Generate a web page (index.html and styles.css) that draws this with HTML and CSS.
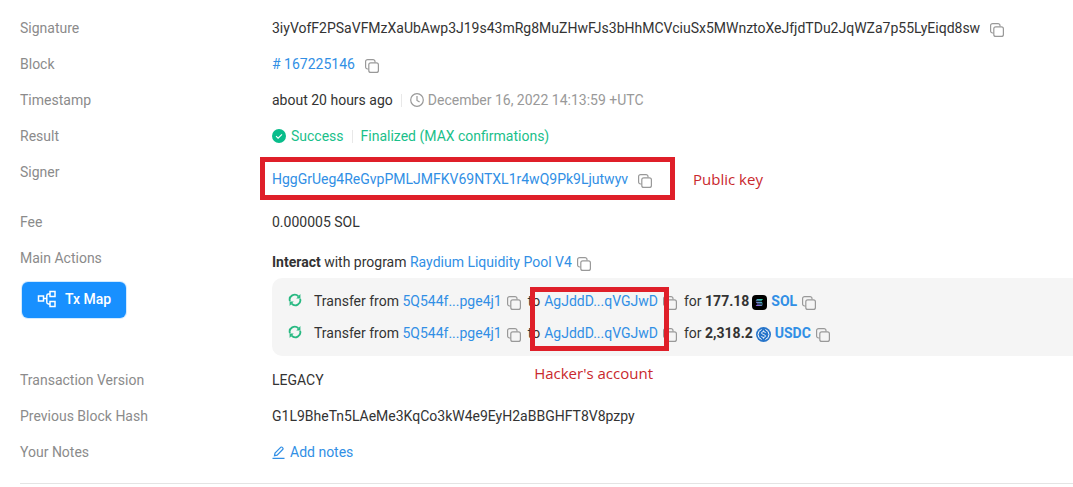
FILE: index.html
```
<!DOCTYPE html>
<html lang="en">
<head>
  <meta charset="UTF-8" />
  <meta name="viewport" content="width=device-width, initial-scale=1.0"/>
  <title>Transaction Details</title>
  <link rel="stylesheet" href="styles.css">
</head>
<body>

<!-- Shared icons -->
<svg class="sprite" aria-hidden="true">
  <symbol id="copy" viewBox="0 0 14 14">
    <path d="M3.6 10H2.6A2 2 0 0 1 .6 8V2.6A2 2 0 0 1 2.6.6H8a2 2 0 0 1 2 2v1" fill="none" stroke="currentColor" stroke-width="1.2"/>
    <rect x="3.8" y="3.8" width="9.6" height="9.6" rx="2" fill="none" stroke="currentColor" stroke-width="1.2"/>
  </symbol>
  <symbol id="sync" viewBox="0 0 14 14">
    <path d="M1.9 8.200A5 5 0 0 1 10.400 3.400M12.100 5.800A5 5 0 0 1 3.600 10.600" fill="none" stroke="currentColor" stroke-width="1.8"/>
    <path d="M12.400.9v4.500H8.300zM1.600 13.100V8.600h4.100z" fill="currentColor"/>
  </symbol>
</svg>

<dl class="details">
  <div class="row">
    <dt>Signature</dt>
    <dd>3iyVofF2PSaVFMzXaUbAwp3J19s43mRg8MuZHwFJs3bHhMCVciuSx5MWnztoXeJfjdTDu2JqWZa7p55LyEiqd8sw
      <button class="copy wide" aria-label="Copy signature"><svg><use href="#copy"/></svg></button>
    </dd>
  </div>
  <div class="row">
    <dt>Block</dt>
    <dd><a href="#"># 167225146</a>
      <button class="copy wide" aria-label="Copy block"><svg><use href="#copy"/></svg></button>
    </dd>
  </div>
  <div class="row">
    <dt>Timestamp</dt>
    <dd>about 20 hours ago
      <span class="divider"></span>
      <span class="date">
        <svg class="clock" viewBox="0 0 14 14" fill="none" stroke="currentColor" stroke-width="1.2"><circle cx="7" cy="7" r="6.3"/><path d="M7 3v4.4l2.6 1.6"/></svg>
        December 16, 2022 14:13:59 +UTC
      </span>
    </dd>
  </div>
  <div class="row">
    <dt>Result</dt>
    <dd class="success">
      <svg class="check" viewBox="0 0 14 14"><circle cx="7" cy="7" r="7" fill="currentColor"/><path d="M4 7.2l2.1 2L10 5.3" fill="none" stroke="#fff" stroke-width="1.1"/></svg>
      Success
      <span class="divider"></span>
      Finalized (MAX confirmations)
    </dd>
  </div>
  <div class="row">
    <dt>Signer</dt>
    <dd class="signer">
      <div class="marked">
        <a href="#">HggGrUeg4ReGvpPMLJMFKV69NTXL1r4wQ9Pk9Ljutwyv</a>
        <button class="copy wide" aria-label="Copy signer"><svg><use href="#copy"/></svg></button>
        <span class="frame key-frame"></span>
      </div>
      <span class="note">Public key</span>
    </dd>
  </div>
  <div class="row">
    <dt>Fee</dt>
    <dd>0.000005 SOL</dd>
  </div>
  <div class="row actions">
    <dt>Main Actions
      <button class="tx-map">
        <svg viewBox="0 0 20 18" fill="none" stroke="currentColor" stroke-width="1.5"><rect x="1.500" y="6" width="5" height="5"/><rect x="13" y="1.500" width="5" height="5"/><rect x="13" y="11.500" width="5" height="5"/><path d="M6.500 8.500h3.300M13 4h-1.500q-1.700 0-1.700 1.700v6.600q0 1.700 1.700 1.700H13"/></svg>
        Tx Map
      </button>
    </dt>
    <dd>
      <div class="program"><span><b>Interact</b> with program <a href="#">Raydium Liquidity Pool V4</a></span>
        <button class="copy" aria-label="Copy program"><svg><use href="#copy"/></svg></button>
      </div>
      <div class="transfers">
        <div class="transfer">
          <svg class="sync"><use href="#sync"/></svg>
          <span>Transfer from <a href="#">5Q544f...pge4j1</a></span>
          <button class="copy" aria-label="Copy sender"><svg><use href="#copy"/></svg></button>
          <span class="to">to</span>
          <span class="marked"><a href="#">AgJddD...qVGJwD</a><span class="frame account-frame"></span><span class="note account-note">Hacker's account</span></span>
          <button class="copy" aria-label="Copy receiver"><svg><use href="#copy"/></svg></button>
          <span class="for">for <b>177.18</b></span>
          <svg class="token" viewBox="0 0 15 15"><defs><linearGradient id="sol" x1="0" y1="1" x2="1" y2="0"><stop offset="0" stop-color="#a050f0"/><stop offset="1" stop-color="#20e0a0"/></linearGradient></defs><rect width="15" height="15" rx="4" fill="#000"/><path d="M5 4h6l-1.400 1.700H3.600zM3.600 6.700h6L11 8.400H5zM5 9.400h6l-1.400 1.700H3.600z" fill="url(#sol)"/></svg>
          <a href="#"><b>SOL</b></a>
          <button class="copy" aria-label="Copy SOL"><svg><use href="#copy"/></svg></button>
        </div>
        <div class="transfer">
          <svg class="sync"><use href="#sync"/></svg>
          <span>Transfer from <a href="#">5Q544f...pge4j1</a></span>
          <button class="copy" aria-label="Copy sender"><svg><use href="#copy"/></svg></button>
          <span class="to">to</span>
          <a href="#">AgJddD...qVGJwD</a>
          <button class="copy" aria-label="Copy receiver"><svg><use href="#copy"/></svg></button>
          <span class="for">for <b>2,318.2</b></span>
          <svg class="token" viewBox="0 0 15 15" fill="none" stroke="#fff"><circle cx="7.500" cy="7.500" r="7.500" fill="#2775ca" stroke="none"/><path d="M5.600 2.500a5.300 5.300 0 0 0 0 10M9.400 2.500a5.300 5.300 0 0 1 0 10M9.300 6c0-1-.8-1.400-1.800-1.400S5.700 5.100 5.700 6s.8 1.200 1.800 1.500 1.800.6 1.800 1.500-.8 1.400-1.800 1.400S5.700 10 5.700 9M7.500 3.500v1.100M7.500 10.400v1.100"/></svg>
          <a href="#"><b>USDC</b></a>
          <button class="copy" aria-label="Copy USDC"><svg><use href="#copy"/></svg></button>
        </div>
      </div>
    </dd>
  </div>
  <div class="row">
    <dt>Transaction Version</dt>
    <dd>LEGACY</dd>
  </div>
  <div class="row">
    <dt>Previous Block Hash</dt>
    <dd>G1L9BheTn5LAeMe3KqCo3kW4e9EyH2aBBGHFT8V8pzpy</dd>
  </div>
  <div class="row">
    <dt>Your Notes</dt>
    <dd>
      <button class="add-notes">
        <svg viewBox="0 0 13 13" fill="none" stroke="currentColor" stroke-width="1.2"><path d="M.5 12.300h12M2.500 9.700l.5-2.600L8.900 1.200a.7.700 0 0 1 1 0l1 1a.7.700 0 0 1 0 1L5.100 9.100z"/></svg>
        Add notes
      </button>
    </dd>
  </div>
</dl>

</body>
</html>
```
FILE: styles.css
```
* {
  box-sizing: border-box;
}
body {
  margin: 0;
  background: #fff;
  font-family: Roboto, sans-serif;
  font-size: 14px;
  line-height: 22px;
  color: #333;
}
a {
  color: #318fe5;
  text-decoration: none;
}
b {
  font-weight: 700;
}
button {
  font: inherit;
  border: none;
  background: none;
  padding: 0;
  cursor: pointer;
}
svg {
  flex: none;
}
.sprite {
  display: none;
}
.details {
  margin: 0 0 0 20px;
  padding: 10px 0 13px;
  border-bottom: 1px solid #e4e4e4;
}
.row {
  display: grid;
  grid-template-columns: 252px 1fr;
  padding: 7px 0;
}
dt {
  color: #8b8b8b;
}
dd {
  display: flex;
  align-items: center;
  margin: 0;
  white-space: nowrap;
}
.copy {
  display: flex;
  color: #999;
  margin: 4px 0 0 5px;
}
.copy svg {
  width: 14px;
  height: 14px;
}
.copy.wide {
  margin-left: 10px;
}
.divider {
  width: 1px;
  height: 13px;
  margin: 0 8px;
  background: #e8e8e8;
}
.date {
  display: flex;
  align-items: center;
  gap: 4px;
  color: #999;
}
.clock, .check {
  width: 14px;
  height: 14px;
}
.success {
  color: #1ac08a;
}
.check {
  margin-right: 5px;
  color: #08bd8b;
}

/* Signer and its callout */
.signer {
  padding: 7px 0;
}
.marked {
  display: flex;
  align-items: center;
  position: relative;
}
.frame {
  position: absolute;
  border: 5px solid #df1f29;
  pointer-events: none;
}
.key-frame {
  inset: -11px -23px -10px -12px;
}
.note {
  margin-left: 41px;
  font-family: "Open Sans", sans-serif;
  font-size: 15px;
  line-height: 20px;
  color: #c9282d;
}

/* Main actions */
.actions {
  padding-bottom: 6px;
}
.actions dd {
  display: block;
}
.tx-map {
  display: flex;
  align-items: center;
  gap: 8px;
  height: 36px;
  margin: 13px 0 0 2px;
  padding: 0 15px 2px;
  border-radius: 6px;
  background: #1890ff;
  box-shadow: 0 0 0 1px #d3eaff;
  color: #fff;
  font-weight: 500;
}
.tx-map svg {
  width: 20px;
  height: 18px;
}
.program {
  display: flex;
  align-items: center;
  padding: 4px 0 5px;
}
.transfers {
  padding: 7px 16px;
  border-radius: 10px 0 0 10px;
  background: #f5f5f5;
}
.transfer {
  display: flex;
  align-items: center;
  height: 32px;
}
.sync {
  width: 14px;
  height: 14px;
  margin: 0 12px 2px 0;
  color: #28b982;
}
.to {
  margin: 0 4px 0 7px;
}
.for {
  margin-left: 7px;
}
.token {
  width: 15px;
  height: 15px;
  margin: 2px 4px 0 3px;
}
.account-frame {
  inset: -3px -11px -39px -14px;
}
.account-note {
  position: absolute;
  top: 73px;
  left: -10px;
  margin: 0;
}
.add-notes {
  display: flex;
  align-items: center;
  gap: 5px;
  color: #318fe5;
}
.add-notes svg {
  width: 13px;
  height: 13px;
}
```
